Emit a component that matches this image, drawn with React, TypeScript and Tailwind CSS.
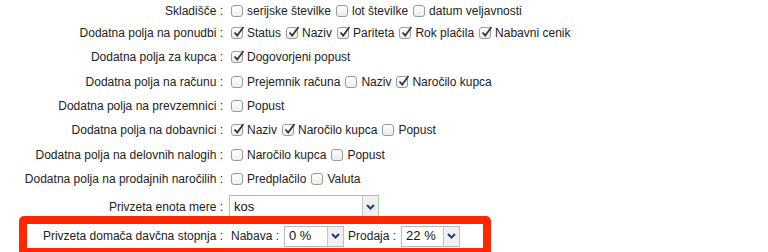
import React from "react";

function Box({ checked }: { checked?: boolean }) {
  return (
    <span className="relative inline-block w-[12px] h-[12px] shrink-0 rounded-[3px] border border-[#9a9a9a] bg-gradient-to-b from-[#ffffff] to-[#ececec]">
      {checked && (
        <svg
          className="absolute left-[1px] top-[-2px]"
          width="12"
          height="12"
          viewBox="0 0 12 12"
        >
          <path d="M1.5 6.5 L4.2 9.6 L10.5 1" fill="none" stroke="#333" strokeWidth="1.7" />
        </svg>
      )}
    </span>
  );
}

function Item({ label, checked }: { label: string; checked?: boolean }) {
  return (
    <span className="flex items-center gap-[4px] whitespace-nowrap">
      <Box checked={checked} />
      <span>{label}</span>
    </span>
  );
}

function Select({ value, w, h }: { value: string; w: string; h: string }) {
  return (
    <span className={`flex ${w} ${h} border border-[#b4b9c2] border-r-[#9fd6a6] bg-white`}>
      <span className="flex-1 flex items-center pl-[4px] text-[13px] text-[#111]">{value}</span>
      <span className="w-[16px] flex items-center justify-center bg-[#f0f0f0] border-l border-[#c4c7cc]">
        <svg width="9" height="6" viewBox="0 0 9 6">
          <path d="M1 1 L4.5 4.5 L8 1" fill="none" stroke="#1f3f7f" strokeWidth="2" />
        </svg>
      </span>
    </span>
  );
}

function Row({ label, children, h = "h-[24.3px]" }: { label: string; children: React.ReactNode; h?: string }) {
  return (
    <div className={`flex items-center ${h}`}>
      <div className="w-[223px] text-right whitespace-nowrap">{label}</div>
      <div className="ml-[8px] flex items-center gap-[5px]">{children}</div>
    </div>
  );
}

export default function App() {
  return (
    <div
      className="w-[768px] h-[252px] overflow-hidden bg-white text-[12px] text-[#222]"
      style={{ fontFamily: '"Liberation Sans", Arial, sans-serif' }}
    >
      <Row label="Skladišče :" h="h-[21px]">
        <Item label="serijske številke" />
        <Item label="lot številke" />
        <Item label="datum veljavnosti" />
      </Row>
      <Row label="Dodatna polja na ponudbi :">
        <Item label="Status" checked />
        <Item label="Naziv" checked />
        <Item label="Pariteta" checked />
        <Item label="Rok plačila" checked />
        <Item label="Nabavni cenik" checked />
      </Row>
      <Row label="Dodatna polja za kupca :">
        <Item label="Dogovorjeni popust" checked />
      </Row>
      <Row label="Dodatna polja na računu :">
        <Item label="Prejemnik računa" />
        <Item label="Naziv" />
        <Item label="Naročilo kupca" checked />
      </Row>
      <Row label="Dodatna polja na prevzemnici :">
        <Item label="Popust" />
      </Row>
      <Row label="Dodatna polja na dobavnici :">
        <Item label="Naziv" checked />
        <Item label="Naročilo kupca" checked />
        <Item label="Popust" />
      </Row>
      <Row label="Dodatna polja na delovnih nalogih :">
        <Item label="Naročilo kupca" />
        <Item label="Popust" />
      </Row>
      <Row label="Dodatna polja na prodajnih naročilih :">
        <Item label="Predplačilo" />
        <Item label="Valuta" />
      </Row>
      <div className="flex items-center h-[23px] mt-[4px]">
        <div className="w-[223px] text-right whitespace-nowrap">Privzeta enota mere :</div>
        <div className="ml-[6px]">
          <Select value="kos" w="w-[150px]" h="h-[23px]" />
        </div>
      </div>
      <div className="relative -mt-[2px] ml-[19px] w-[472px] rounded-[5px] border-[8px] border-[#ff2600] bg-white">
        <div className="flex items-center h-[24px]">
          <div className="w-[196px] text-right whitespace-nowrap">Privzeta domača davčna stopnja :</div>
          <div className="ml-[8px] flex items-center whitespace-nowrap">
            <span>Nabava :</span>
            <span className="ml-[5px]">
              <Select value="0 %" w="w-[60px]" h="h-[21px]" />
            </span>
            <span className="ml-[4px]">Prodaja :</span>
            <span className="ml-[5px]">
              <Select value="22 %" w="w-[59px]" h="h-[21px]" />
            </span>
          </div>
        </div>
      </div>
    </div>
  );
}
